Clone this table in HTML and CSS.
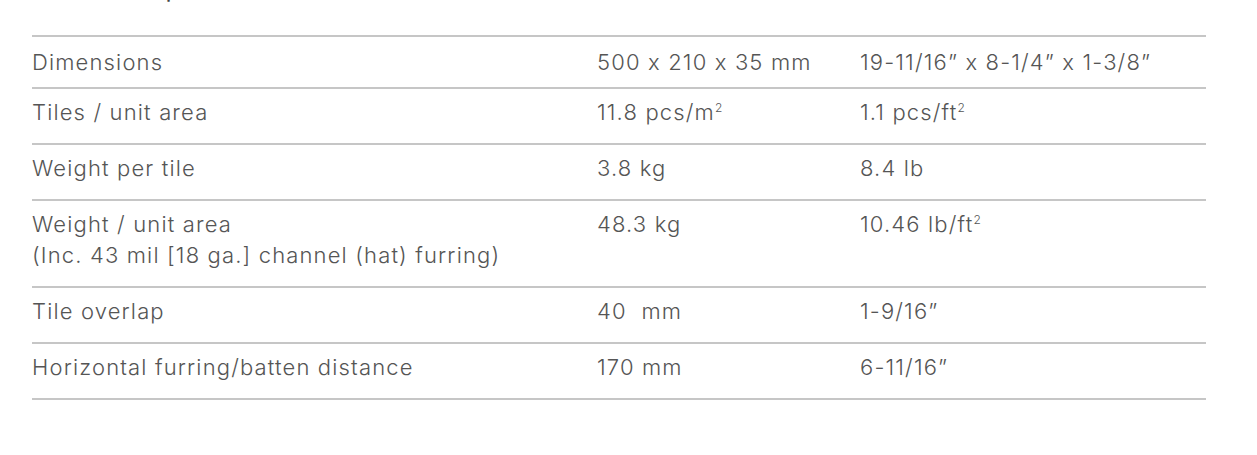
FILE: index.html
```html
<!DOCTYPE html>
<html lang="en">
<head>
<meta charset="utf-8">
<title>Technical specifications</title>
<link rel="stylesheet" href="styles.css">
</head>
<body>
<div class="page">
  <h2 class="heading">Technical specifications</h2>
  <div class="spec-table">
    <div class="row first">
      <div class="cell">Dimensions</div>
      <div class="cell">500 x 210 x 35 mm</div>
      <div class="cell">19-11/16” x 8-1/4” x 1-3/8”</div>
    </div>
    <div class="row">
      <div class="cell">Tiles / unit area</div>
      <div class="cell">11.8 pcs/m<sup>2</sup></div>
      <div class="cell">1.1 pcs/ft<sup>2</sup></div>
    </div>
    <div class="row">
      <div class="cell">Weight per tile</div>
      <div class="cell">3.8 kg</div>
      <div class="cell">8.4 lb</div>
    </div>
    <div class="row">
      <div class="cell">Weight / unit area<br>(Inc. 43 mil [18 ga.] channel (hat) furring)</div>
      <div class="cell">48.3 kg</div>
      <div class="cell">10.46 lb/ft<sup>2</sup></div>
    </div>
    <div class="row">
      <div class="cell">Tile overlap</div>
      <div class="cell">40&nbsp; mm</div>
      <div class="cell">1-9/16”</div>
    </div>
    <div class="row last">
      <div class="cell">Horizontal furring/batten distance</div>
      <div class="cell">170 mm</div>
      <div class="cell">6-11/16”</div>
    </div>
  </div>
</div>
</body>
</html>
```

FILE: styles.css
```css
html, body {
  margin: 0;
  padding: 0;
  background: #ffffff;
}

.page {
  padding: 0 51px 0 32px;
  font-family: Inter, "Liberation Sans", sans-serif;
  font-feature-settings: "calt" 0;
  color: #555555;
}

.heading {
  margin: -24px 0 0 0;
  font-size: 25px;
  line-height: 25px;
  font-weight: 400;
  color: #444444;
  height: 59px;
}

.spec-table {
  display: flex;
  flex-direction: column;
}

.row {
  display: grid;
  grid-template-columns: 565px 263px 1fr;
  border-top: 2px solid #c6c6c6;
  padding: 7.5px 0 15.5px 0;
  font-size: 22px;
  line-height: 31px;
  font-weight: 300;
  letter-spacing: 1.15px;
}

.row.first {
  padding: 9.5px 0 9.5px 0;
}

.row.last {
  border-bottom: 2px solid #c6c6c6;
}

.cell sup {
  font-size: 12px;
  line-height: 0;
  vertical-align: 8px;
  letter-spacing: 0;
}
```
